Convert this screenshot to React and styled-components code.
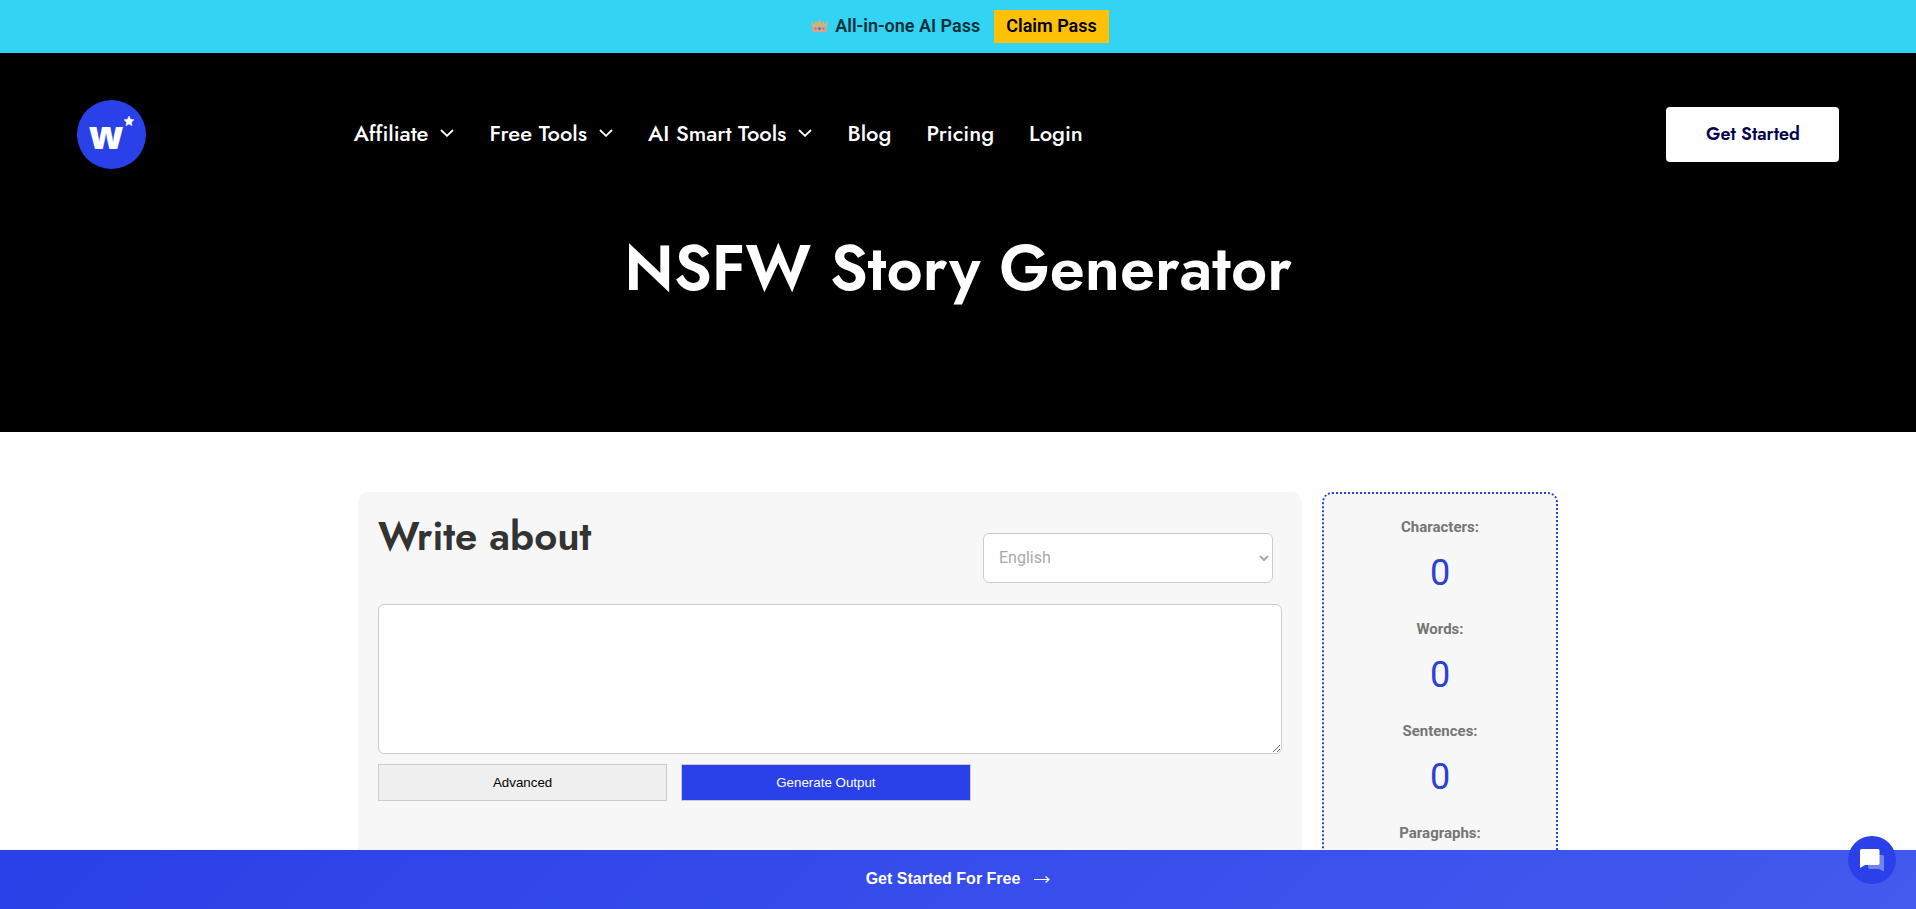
import React, { useState } from 'react';
import styled, { createGlobalStyle } from 'styled-components';

const heading = `Jost, Lato, sans-serif`;
const body = `Roboto, sans-serif`;
const arial = `"Liberation Sans", Arial, sans-serif`;

const menu = [
    { name: 'Affiliate', sub: true },
    { name: 'Free Tools', sub: true },
    { name: 'AI Smart Tools', sub: true },
    { name: 'Blog' },
    { name: 'Pricing' },
    { name: 'Login' },
];

const countText = (text) => [
    { label: 'Characters:', value: text.length },
    { label: 'Words:', value: text.split(/\s+/).filter(Boolean).length },
    { label: 'Sentences:', value: text.split(/[.!?]+/).filter((s) => s.trim()).length },
    { label: 'Paragraphs:', value: text.split(/\n+/).filter((s) => s.trim()).length },
];

const Crown = () => (
    <svg width="17" height="15" viewBox="0 0 17 15" aria-hidden="true">
        <path d="M0.3 3 L3.6 6.5 L4.6 2 L6.6 5.5 L8.5 0.5 L10.4 5.5 L12.4 2 L13.4 6.5 L16.7 3 L15.3 13.5 Q8.5 15 1.7 13.5 Z" fill="#cfb37f" />
        <path d="M1.2 9 H15.8 L15.3 13.5 Q8.5 15 1.7 13.5 Z" fill="#dba287" />
        <circle cx="8.5" cy="10.5" r="1.6" fill="#4f7be0" />
        <circle cx="4.6" cy="10.5" r="1" fill="#a9718f" />
        <circle cx="12.4" cy="10.5" r="1" fill="#a9718f" />
    </svg>
);

const Chevron = () => (
    <svg width="14" height="8" viewBox="0 0 14 8" fill="none" aria-hidden="true">
        <path d="M1 1 L7 6.8 L13 1" stroke="#fff" strokeWidth="1.8" />
    </svg>
);

const Star = () => (
    <svg width="10" height="10" viewBox="0 0 20 20" aria-hidden="true">
        <path d="M10 0 L13 6.6 L20 7.5 L14.8 12.4 L16.2 19.5 L10 16 L3.8 19.5 L5.2 12.4 L0 7.5 L7 6.6 Z" fill="#fff" stroke="#fff" />
    </svg>
);

const ChatIcon = () => (
    <svg width="26" height="24" viewBox="0 0 26 24" aria-hidden="true">
        <path d="M9 7 H23 Q25 7 25 9 V23.5 L20 21 H11 Q9 21 9 19 Z" fill="#fff" fillOpacity="0.35" />
        <path d="M2.5 1 H19 Q20.5 1 20.5 2.5 V15.5 Q20.5 17 19 17 H6 L1 20 V2.5 Q1 1 2.5 1 Z" fill="#fff" />
    </svg>
);

const Arrow = () => (
    <svg width="16" height="8" viewBox="0 0 16 8" fill="none" aria-hidden="true">
        <path d="M0 4.5 H15 M11.5 1.5 L15 4.5 L11.5 7.5" stroke="#fff" strokeWidth="1.2" />
    </svg>
);

function App() {
    const [text, setText] = useState('');

    return (
        <>
            <GlobalStyle />
            <PassBar>
                <PassText><Crown /> All-in-one AI Pass</PassText>
                <PassLink href="#pass">Claim Pass</PassLink>
            </PassBar>

            <Hero>
                <HeaderRow>
                    <Logo href="#home" aria-label="Home">
                        w
                        <LogoStar><Star /></LogoStar>
                    </Logo>
                    <Nav>
                        {menu.map((item) => (
                            <NavLink key={item.name} href="#menu">
                                {item.name}
                                {item.sub && <Chevron />}
                            </NavLink>
                        ))}
                    </Nav>
                    <StartLink href="#start">Get Started</StartLink>
                </HeaderRow>
                <Title>NSFW Story Generator</Title>
            </Hero>

            <Main>
                <Panel>
                    <PanelHead>
                        <PanelTitle id="about">Write about</PanelTitle>
                        <Language aria-label="Language" defaultValue="English">
                            <option>English</option>
                        </Language>
                    </PanelHead>
                    <Story aria-labelledby="about" value={text} onChange={(e) => setText(e.target.value)} />
                    <Actions>
                        <ActionButton type="button">Advanced</ActionButton>
                        <ActionButton type="button" $primary>Generate Output</ActionButton>
                    </Actions>
                </Panel>
                <Stats>
                    {countText(text).map((stat) => (
                        <Stat key={stat.label}>
                            <StatLabel>{stat.label}</StatLabel>
                            <StatValue>{stat.value}</StatValue>
                        </Stat>
                    ))}
                </Stats>
            </Main>

            <BottomBar href="#start">Get Started For Free <Arrow /></BottomBar>
            <ChatButton type="button" aria-label="Open chat"><ChatIcon /></ChatButton>
        </>
    );
}
export default App;

const GlobalStyle = createGlobalStyle`
    * { box-sizing: border-box; }
    html { scrollbar-width: none; }
    body {
        margin: 0;
        background: #fff;
        font-family: ${body};
    }
    a { text-decoration: none; }
    svg { flex: none; }
`

const PassBar = styled.div`
    display: flex;
    align-items: flex-start;
    justify-content: center;
    gap: 14px;
    padding: 10px;
    background: #33d3f3;
    font-size: 18px;
    font-weight: 600;
    line-height: 31px;
`

const PassText = styled.span`
    display: flex;
    align-items: center;
    gap: 7px;
    padding-left: 4px;
    color: #08303a;
`

const PassLink = styled.a`
    padding: 0 12px 2px;
    background: #ffc107;
    color: #000;
`

const Hero = styled.header`
    padding: 47px 4% 125px;
    background: #000;
`

const HeaderRow = styled.div`
    display: flex;
    align-items: center;
`

const Logo = styled.a`
    position: relative;
    display: flex;
    justify-content: center;
    width: 69px;
    height: 69px;
    padding-right: 10px;
    border-radius: 50%;
    background: #2a40e8;
    color: #fff;
    font: 800 38px/69px "Open Sans", sans-serif;
`

const LogoStar = styled.span`
    position: absolute;
    top: 16px;
    left: 47px;
    display: flex;
`

const Nav = styled.nav`
    display: flex;
    gap: 35px;
    margin-left: 208px;
    padding-bottom: 3px;
`

const NavLink = styled.a`
    display: flex;
    align-items: center;
    gap: 12px;
    color: #fff;
    font: 500 22px/32px ${heading};
`

const StartLink = styled.a`
    margin-left: auto;
    width: 173px;
    border-radius: 4px;
    background: #fff;
    color: #05054d;
    font: 600 18px/55px ${heading};
    text-align: center;
`

const Title = styled.h1`
    margin: 61px 0 0;
    color: #fff;
    font: 600 63px/77px ${heading};
    text-align: center;
`

const Main = styled.main`
    display: grid;
    grid-template-columns: minmax(0, 4fr) minmax(0, 1fr);
    gap: 20px;
    max-width: 1200px;
    margin: 60px auto 80px;
`

const Panel = styled.section`
    padding: 20px;
    border-radius: 10px;
    background: #f7f7f7;
`

const PanelHead = styled.div`
    display: flex;
    justify-content: space-between;
    padding-right: 9px;
    margin-bottom: 21px;
`

const PanelTitle = styled.h2`
    margin: 0;
    color: #333;
    font: 600 40px/48px ${heading};
`

const Language = styled.select`
    width: 290px;
    height: 50px;
    margin-top: 21px;
    padding: 0 11px 2px;
    border: 1px solid #ccc;
    border-radius: 6px;
    background: #fff;
    color: #a9a9a9;
    font: 400 16px ${body};
`

const Story = styled.textarea`
    display: block;
    width: 100%;
    height: 150px;
    padding: 12px;
    border: 1px solid #ccc;
    border-radius: 6px;
    background: #fff;
    font: 400 16px/24px ${body};
`

const Actions = styled.div`
    display: flex;
    gap: 14px;
    margin-top: 10px;
`

const ActionButton = styled.button`
    width: 32%;
    height: 37px;
    border: 1px solid #ccc;
    background: ${(props) => (props.$primary ? '#2a40e8' : '#efefef')};
    color: ${(props) => (props.$primary ? '#fff' : '#000')};
    font-family: ${arial};
`

const Stats = styled.aside`
    padding: 18px 0;
    border: 2px dotted #2a40d8;
    border-radius: 10px;
    background: #f7f7f7;
    text-align: center;
`

const Stat = styled.div`
    margin-bottom: 19px;
`

const StatLabel = styled.div`
    color: #757575;
    font-size: 15px;
    font-weight: 700;
    line-height: 30px;
`

const StatValue = styled.div`
    padding-top: 9px;
    color: #2a40d8;
    font-size: 36px;
    line-height: 44px;
`

const BottomBar = styled.a`
    position: fixed;
    right: 0;
    bottom: 0;
    left: 0;
    display: flex;
    align-items: center;
    justify-content: center;
    gap: 14px;
    height: 59px;
    padding-bottom: 2px;
    background: linear-gradient(135deg, #2a40e8, #435aef);
    color: #fff;
    font: 700 16px/24px ${arial};
`

const ChatButton = styled.button`
    position: fixed;
    right: 20px;
    bottom: 25px;
    display: flex;
    align-items: center;
    justify-content: center;
    width: 48px;
    height: 48px;
    padding: 0;
    border: 0;
    border-radius: 50%;
    background: #2a40e8;
`
